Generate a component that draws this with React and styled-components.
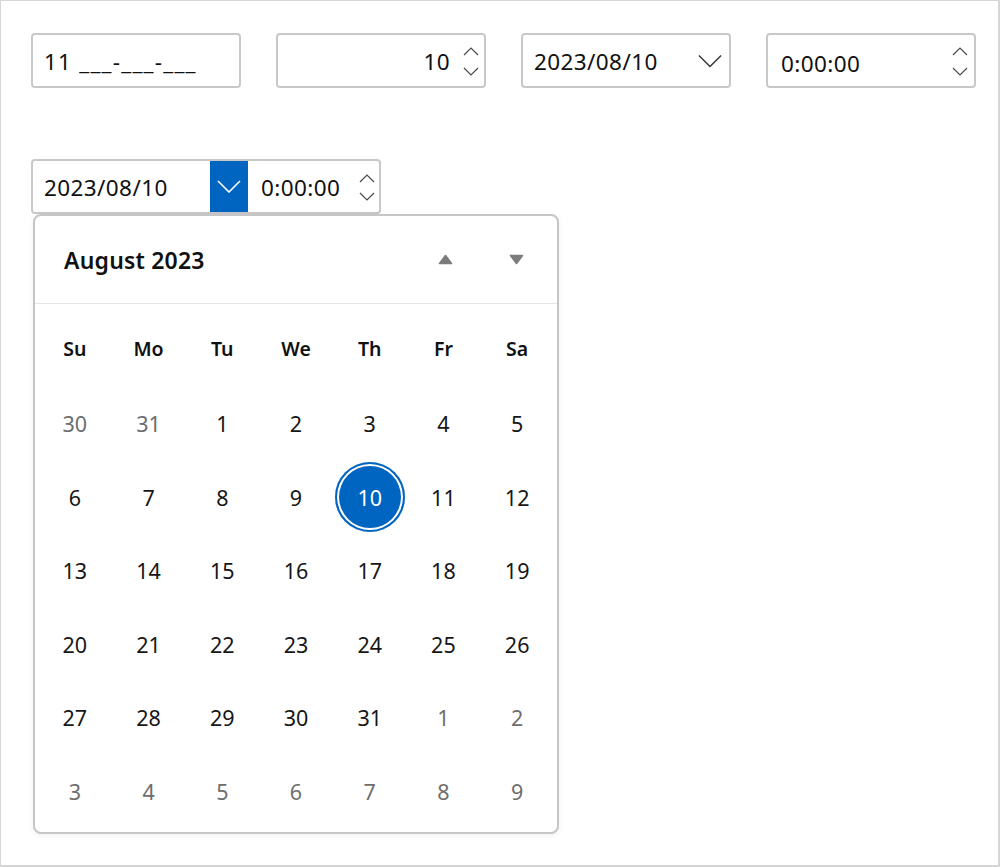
import React from "react";
import styled, { createGlobalStyle } from "styled-components";

/* ===== Global ===== */
const GlobalStyle = createGlobalStyle`
  body {
    margin: 0;
    font-family: "Noto Sans", "Open Sans", "Liberation Sans", sans-serif;
    color: #1a1a1a;
    background: #ffffff;
  }
`;

const BLUE = "#0064c1";

/* ===== Layout ===== */
const Frame = styled.div`
  box-sizing: border-box;
  width: 1000px;
  height: 867px;
  border: 1px solid #d6d6d6;
  border-right-width: 2px;
  border-bottom-width: 2px;
  padding: 32px 0 0 30px;
`;

const TopRow = styled.div`
  display: grid;
  grid-template-columns: repeat(4, 210px);
  column-gap: 35px;
`;

const Field = styled.div`
  box-sizing: border-box;
  width: ${(p) => p.$width || 210}px;
  height: ${(p) => p.$height || 55}px;
  border: 2px solid #c8c8c8;
  border-radius: 4px;
  display: flex;
  align-items: center;
  background: #fff;
`;

const FieldText = styled.div`
  flex: ${(p) => (p.$fixed ? "none" : 1)};
  width: ${(p) => (p.$fixed ? `${p.$fixed}px` : "auto")};
  box-sizing: border-box;
  padding: ${(p) => p.$pad || "0 0 0 11px"};
  text-align: ${(p) => p.$align || "left"};
  font-size: 22.5px;
  letter-spacing: ${(p) => p.$spacing || "0.4px"};
  color: #111;
  white-space: nowrap;
  line-height: 1;
  margin-top: ${(p) => p.$drop || 4}px;
`;

const Spinner = styled.div`
  display: flex;
  flex-direction: column;
  justify-content: space-between;
  height: ${(p) => p.$span || 29}px;
  margin-right: ${(p) => p.$right || 6}px;
  margin-top: 1px;
`;

const DropChevron = styled.div`
  width: 24px;
  margin-right: 7px;
  display: flex;
  align-items: center;
  justify-content: center;
`;

const PickerWrap = styled.div`
  position: relative;
  margin-top: 71px;
  width: 350px;
`;

const ToggleButton = styled.div`
  width: 38px;
  height: 100%;
  background: ${BLUE};
  display: flex;
  align-items: center;
  justify-content: center;
  flex: none;
`;

/* ===== Calendar popup ===== */
const Popup = styled.div`
  position: absolute;
  top: 100%;
  left: 2px;
  box-sizing: border-box;
  width: 526px;
  height: 620px;
  border: 2px solid #c6c6c6;
  border-radius: 8px;
  background: #fff;
  box-shadow: 0 2px 6px rgba(0, 0, 0, 0.06);
`;

const Header = styled.div`
  box-sizing: border-box;
  height: 88px;
  border-bottom: 1px solid #e6e6e6;
  display: flex;
  align-items: center;
  justify-content: space-between;
  padding: 0 21px 0 29px;
`;

const MonthTitle = styled.div`
  font-size: 23px;
  font-weight: 600;
  letter-spacing: 0.2px;
  color: #111;
  margin-top: 0px;
`;

const Nav = styled.div`
  display: flex;
  gap: 31px;
`;

const NavButton = styled.div`
  width: 40px;
  height: 30px;
  display: flex;
  align-items: center;
  justify-content: center;
`;

const Grid = styled.div`
  display: grid;
  grid-template-columns: repeat(7, 1fr);
  grid-template-rows: 76px repeat(6, 73.5px);
  padding: 7px 3px 3px 3px;
`;

const WeekDay = styled.div`
  display: flex;
  align-items: center;
  justify-content: center;
  font-size: 19.5px;
  font-weight: 600;
  color: #111;
  margin-bottom: 2px;
`;

const Day = styled.div`
  display: flex;
  align-items: center;
  justify-content: center;
  font-size: 21.5px;
  color: ${(p) => (p.$muted ? "#6e6e6e" : "#161616")};
`;

const Selected = styled.div`
  width: 70px;
  height: 70px;
  border-radius: 50%;
  background: ${BLUE};
  box-shadow: inset 0 0 0 2px ${BLUE}, inset 0 0 0 4px #fff;
  color: #fff;
  display: flex;
  align-items: center;
  justify-content: center;
  font-size: 21.5px;
`;

/* ===== Icons ===== */
const Chevron = ({ up, w = 16, h = 9, color = "#4a4a4a", sw = 1.2 }) => (
  <svg width={w} height={h} viewBox={`0 0 ${w} ${h}`}>
    <path
      d={
        up
          ? `M1 ${h - 1} L${w / 2} 1 L${w - 1} ${h - 1}`
          : `M1 1 L${w / 2} ${h - 1} L${w - 1} 1`
      }
      fill="none"
      stroke={color}
      strokeWidth={sw}
    />
  </svg>
);

const Triangle = ({ up }) => (
  <svg width="15" height="11" viewBox="0 0 15 11">
    <path
      d={up ? "M7.5 1.5 L13.5 9.5 L1.5 9.5 Z" : "M1.5 1.5 L13.5 1.5 L7.5 9.5 Z"}
      fill="#7c7c7c"
      stroke="#7c7c7c"
      strokeWidth="1.6"
      strokeLinejoin="round"
    />
  </svg>
);

const Spin = ({ span, right }) => (
  <Spinner $span={span} $right={right}>
    <Chevron up />
    <Chevron />
  </Spinner>
);

/* ===== Data ===== */
const weekDays = ["Su", "Mo", "Tu", "We", "Th", "Fr", "Sa"];

const days = [
  ...[30, 31].map((d) => ({ d, muted: true })),
  ...Array.from({ length: 31 }, (_, i) => ({ d: i + 1 })),
  ...Array.from({ length: 9 }, (_, i) => ({ d: i + 1, muted: true })),
];

/* ===== Component ===== */
export default function App() {
  return (
    <Frame>
      <GlobalStyle />
      <TopRow>
        <Field>
          <FieldText $spacing="1.2px">11 ___-___-___</FieldText>
        </Field>

        <Field>
          <FieldText $align="right" $pad="0 13px 0 0">
            10
          </FieldText>
          <Spin span={29} right={5} />
        </Field>

        <Field>
          <FieldText>2023/08/10</FieldText>
          <DropChevron>
            <Chevron w={26} h={14} color="#333" sw={1.5} />
          </DropChevron>
        </Field>

        <Field>
          <FieldText $pad="0 0 0 13px" $drop={8}>
            0:00:00
          </FieldText>
          <Spin span={29} right={6} />
        </Field>
      </TopRow>

      <PickerWrap>
        <Field $width={350} $height={55}>
          <FieldText $fixed={177}>2023/08/10</FieldText>
          <ToggleButton>
            <Chevron w={24} h={13} color="#fff" sw={1.6} />
          </ToggleButton>
          <FieldText $pad="0 0 0 13px">0:00:00</FieldText>
          <Spin span={27} right={4} />
        </Field>

        <Popup>
          <Header>
            <MonthTitle>August 2023</MonthTitle>
            <Nav>
              <NavButton>
                <Triangle up />
              </NavButton>
              <NavButton>
                <Triangle />
              </NavButton>
            </Nav>
          </Header>

          <Grid>
            {weekDays.map((w) => (
              <WeekDay key={w}>{w}</WeekDay>
            ))}
            {days.map((item, i) => (
              <Day key={i} $muted={item.muted}>
                {!item.muted && item.d === 10 ? (
                  <Selected>10</Selected>
                ) : (
                  item.d
                )}
              </Day>
            ))}
          </Grid>
        </Popup>
      </PickerWrap>
    </Frame>
  );
}
